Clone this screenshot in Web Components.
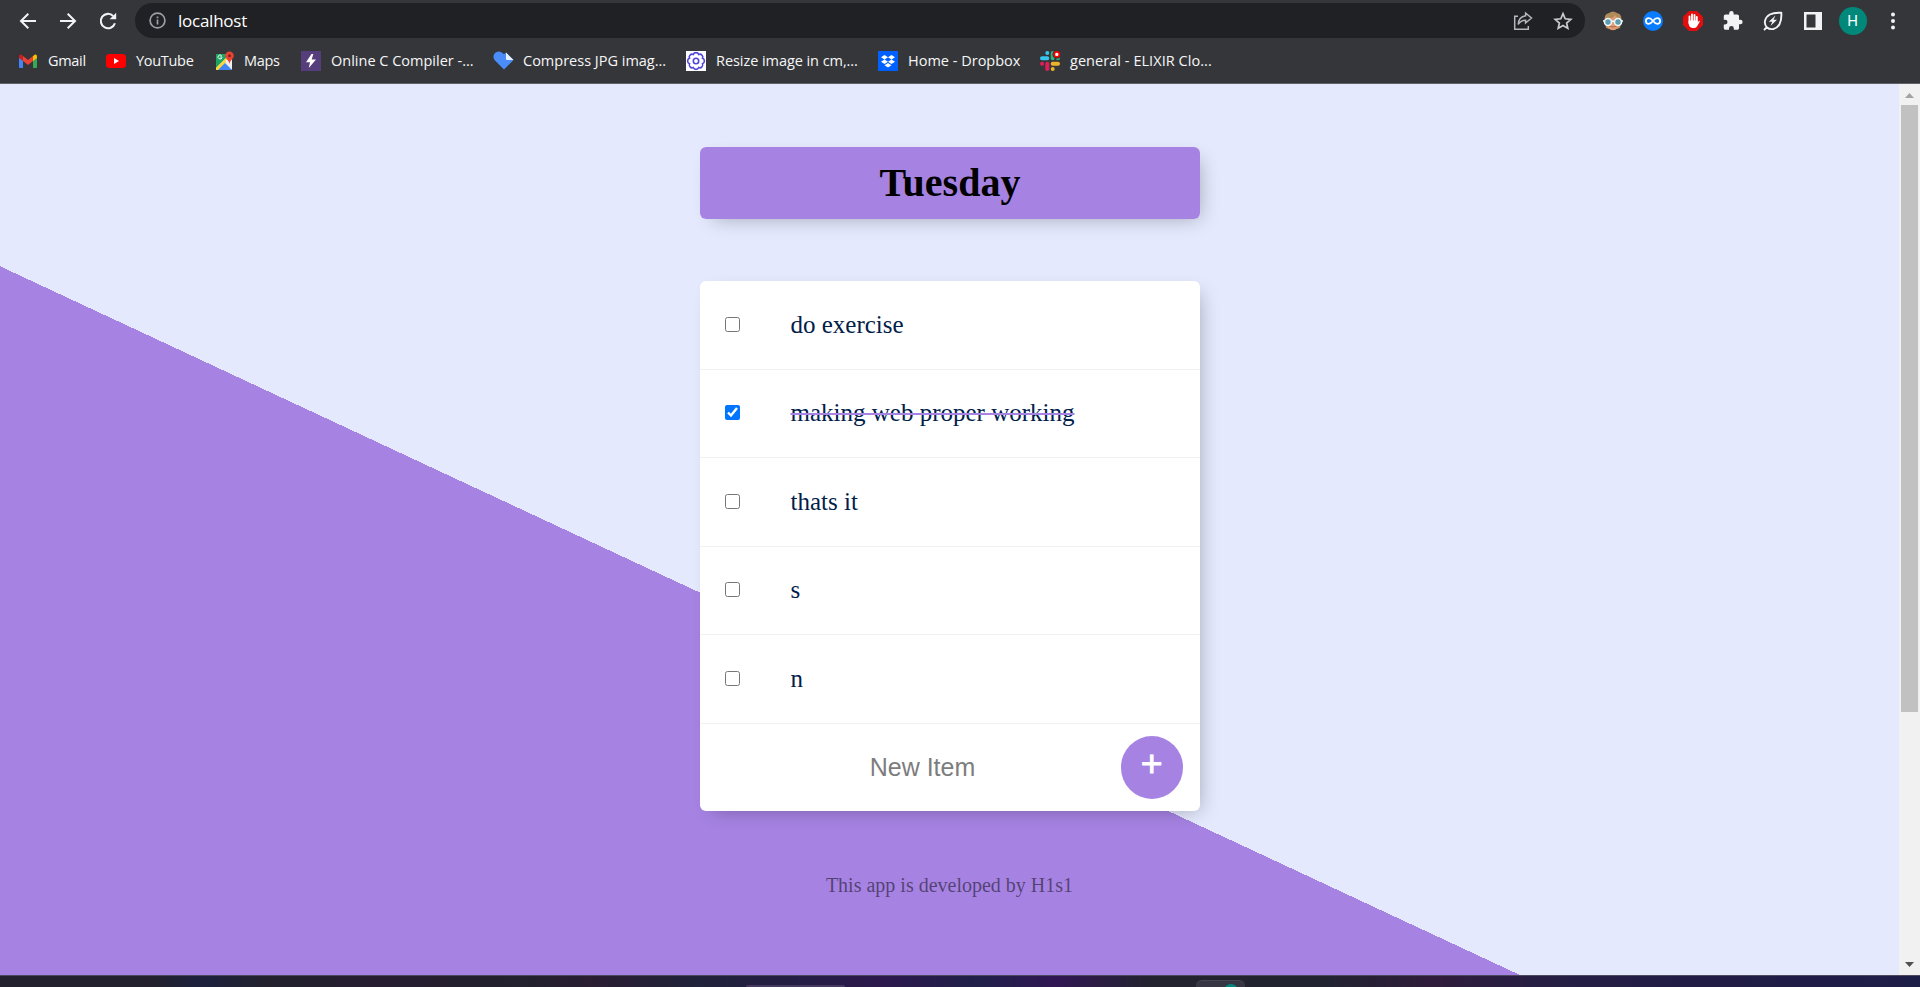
<!DOCTYPE html>
<html lang="en">
<head>
<meta charset="utf-8">
<title>To Do List</title>
<style>
html,body{margin:0;height:100%;overflow:hidden}
</style>
</head>
<body>
<browser-window></browser-window>
<script>
const define = (name, html) => {
  const t = document.createElement('template');
  t.innerHTML = html;
  customElements.define(name, class extends HTMLElement {
    constructor(){ super(); this.attachShadow({mode:'open'}).append(t.content.cloneNode(true)); }
  });
};

define('tool-icon', `<style>:host{display:flex;flex:none;width:40px;height:36px;align-items:center;justify-content:center}::slotted(svg){display:block;overflow:visible}</style><slot></slot>`);

define('address-bar', `<style>
:host{display:flex;align-items:center;width:1450px;height:35px;border-radius:18px;background:#202124;color:#e8eaed;font:17px/35px "Open Sans","Noto Sans",sans-serif;flex:none}
.info{margin:0 12px 0 14px;flex:none}
.url{flex:1;letter-spacing:-.25px;color:#fff}
.end{display:flex;padding-right:2.500px}
</style>
<svg class="info" width="17" height="17" viewBox="0 0 17 17" fill="none" stroke="#9aa0a6" stroke-width="1.7"><circle cx="8.5" cy="8.5" r="7.4"/><path d="M8.5 7.6v4.8M8.5 4.4v1.8"/></svg>
<span class="url"><slot></slot></span>
<span class="end">
<tool-icon><svg width="20" height="20" viewBox="0 0 20 20" fill="none" stroke="#b4b7bb" stroke-width="1.5"><path d="M5 5.2H1.700V18.300H15.300V15"/><path d="M12.600 2 18.500 7 12.600 12V9.200C9 9.200 6.700 10.800 5.200 13.500 5.400 9 8 5.600 12.600 4.800Z"/></svg></tool-icon>
<tool-icon><svg width="20" height="20" viewBox="0 0 20 20" fill="none" stroke="#c9cbce" stroke-width="1.700"><path d="M10 2.700 12.200 7.800 17.800 8.300 13.600 12 14.800 17.400 10 14.600 5.200 17.400 6.400 12 2.200 8.300 7.800 7.800Z"/></svg></tool-icon>
</span>`);

define('browser-toolbar', `<style>
:host{display:flex;height:41px;align-items:center;box-sizing:border-box;padding-left:8px;background:#35363a}
.nav{display:flex;width:127px;flex:none}
.ext{display:flex;padding-left:7.500px}
.avatar{width:28px;height:28px;border-radius:50%;background:#00897b;color:#fff;font:15px/28px Roboto,sans-serif;text-align:center}
</style>
<div class="nav">
<tool-icon><svg width="18" height="18" viewBox="0 0 18 18" fill="none" stroke="#f1f3f4" stroke-width="2"><path d="M17 9H2.500M9.300 1.800 2 9 9.300 16.200"/></svg></tool-icon>
<tool-icon><svg width="18" height="18" viewBox="0 0 18 18" fill="none" stroke="#f1f3f4" stroke-width="2"><path d="M1 9H15.500M8.700 1.800 16 9 8.700 16.200"/></svg></tool-icon>
<tool-icon><svg width="18" height="18" viewBox="0 0 18 18"><path d="M15.900 11.200A7.200 7.200 0 1 1 14.200 4" fill="none" stroke="#f1f3f4" stroke-width="2.100"/><path d="M17.200.7V7.300H10.600Z" fill="#f1f3f4"/></svg></tool-icon>
</div>
<address-bar>localhost</address-bar>
<div class="ext">
<tool-icon><svg width="20" height="20" viewBox="0 0 20 20"><path d="M2 12Q0 3 6 2Q10-1 14 2Q20 3 18 12L17 17 14 18H6L3 17Z" fill="#b08b5c"/><path d="M3.500 8Q10 8 12 4Q14 7 16.500 8V12Q16 19 10 19.200Q4 19 3.500 12Z" fill="#df9b73"/><path d="M6 15Q10 17 14 15" stroke="#b8674c" fill="none"/><g fill="#5c9cae" stroke="#edf7f8" stroke-width="1.600"><circle cx="5" cy="11" r="3.500"/><circle cx="15" cy="11" r="3.500"/><path d="M8.500 10.300h3M0 10h1.500M18.500 10H20"/></g></svg></tool-icon>
<tool-icon><svg width="20" height="20" viewBox="0 0 20 20"><circle cx="10" cy="10" r="10" fill="#0a7cff"/><path d="M10 10C8 7.500 6.800 7.200 5.700 7.200a2.800 2.800 0 0 0 0 5.600C6.800 12.800 8 12.500 10 10S13.200 7.200 14.300 7.200a2.800 2.800 0 0 1 0 5.600C13.200 12.800 12 12.500 10 10Z" fill="none" stroke="#fff" stroke-width="1.800"/></svg></tool-icon>
<tool-icon><svg width="20" height="20" viewBox="0 0 20 20"><path d="M6 0h8l6 6v8l-6 6H6l-6-6V6Z" fill="#e40d0d"/><path d="M6.500 12V5.500M9 10V3.500M11.500 10V4M13.800 11V6" stroke="#fff" stroke-width="1.900" stroke-linecap="round"/><path d="M5.600 9.500H14.700V11.500L16 9.800Q17 9.500 16.700 10.700L14 15.500Q12.500 17.500 9.500 17Q6 16.500 5.600 12.500Z" fill="#fff"/></svg></tool-icon>
<tool-icon><svg width="21.500" height="21.500" viewBox="0 0 24 24"><path fill="#f1f3f4" d="M20.500 11H19V7c0-1.100-.9-2-2-2h-4V3.500a2.500 2.500 0 0 0-5 0V5H4c-1.100 0-1.990.9-1.990 2v3.800H3.500a2.700 2.700 0 0 1 0 5.400H2V20c0 1.100.9 2 2 2h3.800v-1.500a2.700 2.700 0 0 1 5.400 0V22H17c1.100 0 2-.9 2-2v-4h1.500a2.500 2.500 0 0 0 0-5z"/></svg></tool-icon>
<tool-icon><svg width="20" height="20" viewBox="0 0 20 20" fill="none" stroke="#f1f3f4" stroke-width="1.900"><path d="M18.300 1.800Q18.800 9 16.500 13.200C13.500 18.500 7.500 19.600 3.800 16.200C.4 12.500 1.600 6.500 6.800 3.500Q11 1.300 18.300 1.800ZM4 16 1 19"/><path d="M12.500 4.500 5.800 10.800H9.300L7.500 15 14 8.800H10.500Z" fill="#f1f3f4" stroke="none"/></svg></tool-icon>
<tool-icon><svg width="18" height="18" viewBox="0 0 18 18"><path fill="#f1f3f4" fill-rule="evenodd" d="M0 0h18v18H0ZM2.500 2.500v13H11.500v-13Z"/></svg></tool-icon>
<tool-icon><div class="avatar">H</div></tool-icon>
<tool-icon><svg width="4" height="18" viewBox="0 0 4 18" fill="#f1f3f4"><circle cx="2" cy="2.600" r="2"/><circle cx="2" cy="9" r="2"/><circle cx="2" cy="15.400" r="2"/></svg></tool-icon>
</div>`);

define('book-mark', `<style>
:host{display:flex;flex:none;align-items:center;height:22px;color:#f5f6f7;font:14.500px/22px "Open Sans","Noto Sans",sans-serif;white-space:nowrap}
.i{width:20px;height:20px;flex:none;margin-right:10px}
.t{letter-spacing:var(--track,-.3px)}
</style><div class="i"><slot name="icon"></slot></div><span class="t"><slot></slot></span>`);

define('bookmarks-bar', `<style>
:host{display:flex;height:43px;box-sizing:border-box;padding:9px 0 0 18px;background:#35363a;border-bottom:1px solid #5f6368}
svg{display:block}
book-mark{width:var(--w)}
</style>
<book-mark style="--w:88px"><svg slot="icon" width="20" height="20" viewBox="0 0 20 20"><path d="M1 6v10q0 1 1 1h3V9Z" fill="#4285f4"/><path d="M19 6v10q0 1-1 1h-3V9Z" fill="#34a853"/><path d="M15 5 17 3.500Q19 3 19 5.500V7l-4 3Z" fill="#fbbc04"/><path d="M1 7V5.500Q1 3 3.200 3.500L5 5v5Z" fill="#c5221f"/><path d="M5 5l5 4 5-4v5l-5 4-5-4Z" fill="#ea4335"/></svg>Gmail</book-mark>
<book-mark style="--w:108px"><svg slot="icon" width="20" height="20" viewBox="0 0 20 20"><rect y="3" width="20" height="14" rx="3.500" fill="#f00"/><path d="M8 7v6l5-3Z" fill="#fff"/></svg>YouTube</book-mark>
<book-mark style="--w:87px"><svg slot="icon" width="20" height="20" viewBox="0 0 20 20"><rect x="2" y="3" width="16" height="16" rx="1.500" fill="#e8eaed"/><path d="M2 4Q2 3 3 3h13L2 17Z" fill="#1ea362"/><path d="M10 11 18 19H2Z" fill="#4285f4"/><path d="M2 17 14 5l2 2L4 19H2Z" fill="#fdd835"/><path d="M11 9.500 18 17V7Z" fill="#f1f1f1"/><path d="M15.500.5a4.300 4.300 0 0 1 4.300 4.300c0 3-3.500 4-4.300 8.200-.8-4.200-4.300-5.200-4.300-8.200A4.300 4.300 0 0 1 15.500.5Z" fill="#ea4335"/><circle cx="15.500" cy="4.800" r="1.500" fill="#8c1f17"/><path d="M8 6H6.200M7.600 4.700A2 2 0 1 0 8 6.500" fill="none" stroke="#fff"/></svg>Maps</book-mark>
<book-mark style="--w:192px;--track:0px"><svg slot="icon" width="20" height="20" viewBox="0 0 20 20"><path d="M0 0h20v20H0Z" fill="#563d7c"/><path d="M10.500 3 5 11.300h4L7.800 17 15 8.500h-4.300L12.300 3Z" fill="#fff"/></svg>Online C Compiler -...</book-mark>
<book-mark style="--w:193px;--track:0px"><svg slot="icon" width="21" height="20" viewBox="0 0 21 20"><path d="M11 18.500 2 9.500A5.200 5.200 0 0 1 9.500 2L11 3.200 13 1.500 20.500 9Z" fill="#4a8df8"/><path d="M13 1.500 20.500 9H14Q13 9 13 8Z" fill="#e9f1ff"/></svg>Compress JPG imag...</book-mark>
<book-mark style="--w:192px;--track:-.06px"><svg slot="icon" width="20" height="20" viewBox="0 0 20 20"><path d="M0 0h20v20H0Z" fill="#fff"/><g fill="none" stroke="#5046d8" stroke-width="1.600"><path d="M10 1.600Q12 1.600 12.700 3.500 14.500 2.600 15.900 4.100 17.400 5.500 16.500 7.300 18.400 8 18.400 10 18.400 12 16.500 12.700 17.400 14.500 15.900 15.900 14.500 17.400 12.700 16.500 12 18.400 10 18.400 8 18.400 7.300 16.500 5.500 17.400 4.100 15.900 2.600 14.500 3.500 12.700 1.600 12 1.600 10 1.600 8 3.500 7.300 2.600 5.500 4.100 4.100 5.500 2.600 7.300 3.500 8 1.600 10 1.600Z"/><circle cx="10" cy="10" r="2.700"/></g></svg>Resize image in cm,...</book-mark>
<book-mark style="--w:162px;--track:0px"><svg slot="icon" width="20" height="20" viewBox="0 0 20 20"><path d="M0 0h20v20H0Z" fill="#0061ff"/><path fill="#fff" d="M6.500 4 10 6.200 6.500 8.400 3 6.200ZM13.500 4 17 6.200 13.500 8.400 10 6.200ZM6.500 8.500 10 10.700 6.500 12.900 3 10.700ZM13.500 8.500 17 10.700 13.500 12.900 10 10.700ZM10 12 13.500 14.200 10 16.400 6.500 14.200Z"/></svg>Home - Dropbox</book-mark>
<book-mark style="--w:190px;--track:.05px"><svg slot="icon" width="20" height="20" viewBox="0 0 20 20" stroke-width="4" stroke-linecap="round"><path d="M2 7.300H7.300M7.300 2V2.100" stroke="#36c5f0"/><path d="M12.700 2V7.300M18 7.300H17.900" stroke="#2eb67d"/><path d="M12.700 12.700H18M12.700 18V17.900" stroke="#ecb22e"/><path d="M7.300 12.700V18M2 12.700H2.100" stroke="#e01e5a"/><circle cx="16.800" cy="3.400" r="4.400" fill="#35363a" stroke="none"/><circle cx="16.800" cy="3.400" r="2.500" fill="#fff" stroke="#f00" stroke-width="1.600"/></svg>general - ELIXIR Clo...</book-mark>`);

define('todo-box', `<style>
:host{display:block;width:500px;margin:0 auto;background:#fff;border-radius:6px;box-shadow:6.250px 6.250px 18.750px -6.250px rgba(0,0,0,.3)}
</style><slot></slot>`);

define('day-heading', `<style>
:host{display:block}
h1{margin:0;height:72px;box-sizing:border-box;padding-left:1px;border-radius:6px;background:#a683e3;text-align:center;font:bold 40px/71px "Liberation Serif",serif;color:#000}
</style><h1><slot></slot></h1>`);

define('todo-item', `<style>
:host{display:flex;align-items:center;height:87.500px;border-bottom:1px solid #f1f1f1}
input{width:15px;height:15px;margin:0 26px 1px 25px;flex:none}
p{margin:0;padding:0 25px;font:25px "Liberation Serif",serif;color:#00204a}
:host([done]) p{text-decoration:line-through;text-decoration-color:#a683e3;text-decoration-thickness:2px}
</style><input type="checkbox"><p><slot></slot></p>`);

define('new-item', `<style>
:host{display:flex;align-items:center;height:87.500px;box-sizing:border-box;padding-right:16.500px}
.field{flex:1;box-sizing:border-box;padding-left:25px;text-align:center;font:25px "Liberation Sans",Arial,sans-serif;color:#7d7d7d}
button{width:62.500px;height:63px;border:0;border-radius:50%;background:#a683e3;color:#fff;font:37.500px "Liberation Sans",Arial,sans-serif;padding:0 0 7.500px;-webkit-text-stroke:.8px #fff}
</style><div class="field"><slot></slot></div><button>+</button>`);

define('scroll-bar', `<style>
:host{display:flex;flex-direction:column;align-items:center;width:21px;box-sizing:border-box;height:891px;background:#f1f1f1}
.thumb{width:17px;height:607px;background:#c1c1c1}
svg{display:block;flex:none}.gap{flex:1}
</style>
<svg width="21" height="21"><path d="M6 14 10.500 9 15 14Z" fill="#a3a3a3"/></svg><div class="thumb"></div><div class="gap"></div><svg width="21" height="21"><path d="M6 8 10.500 13 15 8Z" fill="#505050"/></svg>`);

define('task-bar', `<style>
:host{display:flex;height:12px;box-sizing:border-box;align-items:flex-end;border-top:1px solid #4c4a5c;overflow:hidden;background:linear-gradient(90deg,#22212d 0,#22212d 8%,#1c213d 10.500%,#22212d 14%,#261d31 20%,#22212d 27%,#291d32 31%,#20223a 36%,#251d45 42%,#2b184c 46%,#20204a 51%,#301653 55%,#22232e 60%,#212330 69%,#301c3c 75%,#261f43 80%,#211c46 88%,#1d1e48 100%)}
.search{width:99px;height:2px;margin-left:746px;border-radius:4px 4px 0 0;background:#45395f}
.app{width:49px;height:7px;margin-left:351px;border-radius:6px 6px 0 0;background:#353543;border-top:1px solid #454553;box-sizing:border-box;overflow:hidden}
.dot{width:14px;height:14px;margin:3px 0 0 28px;border-radius:50%;background:#00897b}
</style><div class="search"></div><div class="app"><div class="dot"></div></div>`);

define('todo-page', `<style>
:host{display:flex;height:891px;overflow:hidden}
main{flex:1;height:1250px;box-sizing:border-box;padding-top:63px;background:linear-gradient(25deg,#a683e3 50%,#e4e9fd 50%)}
.list{margin-top:62px}
footer{margin-top:63px;text-align:center;font:20px/23px "Liberation Serif",serif;color:rgba(0,0,0,.5)}
</style>
<main>
<todo-box><day-heading>Tuesday</day-heading></todo-box>
<todo-box class="list">
<todo-item>do exercise</todo-item>
<todo-item done>making web proper working</todo-item>
<todo-item>thats it</todo-item>
<todo-item>s</todo-item>
<todo-item>n</todo-item>
<new-item>New Item</new-item>
</todo-box>
<footer>This app is developed by H1s1</footer>
</main>
<scroll-bar></scroll-bar>`);

define('browser-window', `<style>
:host{display:flex;flex-direction:column;width:1920px;height:987px}
</style><browser-toolbar></browser-toolbar><bookmarks-bar></bookmarks-bar><todo-page></todo-page><task-bar></task-bar>`);

const page = document.querySelector('browser-window').shadowRoot.querySelector('todo-page');
page.shadowRoot.querySelector('todo-item[done]').shadowRoot.querySelector('input').checked = true;
</script>
</body>
</html>
